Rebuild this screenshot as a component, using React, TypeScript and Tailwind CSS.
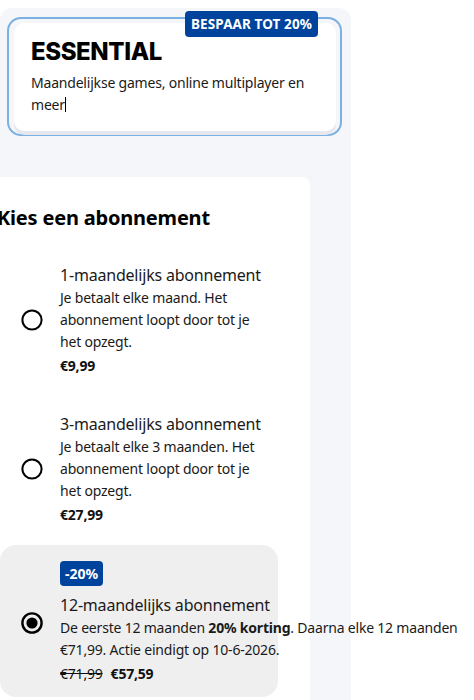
import React from "react";

type Plan = {
  title: string;
  lines: React.ReactNode;
  price: React.ReactNode;
  selected?: boolean;
  badge?: string;
  wide?: boolean;
};

function Radio({ checked }: { checked?: boolean }) {
  return (
    <svg width="22" height="22" viewBox="0 0 22 22" className="shrink-0">
      <circle cx="11" cy="11" r="9.6" fill="none" stroke="#000" strokeWidth={checked ? 2.4 : 2} />
      {checked && <circle cx="11" cy="11" r="5.6" fill="#000" />}
    </svg>
  );
}

function PlanOption({ plan }: { plan: Plan }) {
  return (
    <div
      className={`flex items-center gap-[17px] pl-[21px] pr-3 w-[278px] rounded-2xl ${
        plan.selected ? "bg-[#efefef] pt-4 pb-[12px]" : "py-4"
      }`}
    >
      <Radio checked={plan.selected} />
      <div className="flex-1 min-w-0 flex flex-col tracking-[-0.2px]">
        {plan.badge && (
          <span className="self-start mb-[7px] h-[25px] px-[5px] rounded-[4px] bg-[#00439c] text-white text-[14px] font-bold leading-[25px] tracking-normal">
            {plan.badge}
          </span>
        )}
        <div className="text-[16px] leading-[24px] text-[#1a1a1a] whitespace-nowrap">{plan.title}</div>
        <div className={`text-[14px] leading-[22px] text-[#1a1a1a] ${plan.wide ? "w-[412px]" : ""}`}>
          {plan.lines}
        </div>
        <div className="mt-[2px] text-[14px] leading-[22px] text-[#111]">{plan.price}</div>
      </div>
    </div>
  );
}

export default function App() {
  const plans: Plan[] = [
    {
      title: "1-maandelijks abonnement",
      lines: "Je betaalt elke maand. Het abonnement loopt door tot je het opzegt.",
      price: <span className="font-bold">€9,99</span>,
    },
    {
      title: "3-maandelijks abonnement",
      lines: "Je betaalt elke 3 maanden. Het abonnement loopt door tot je het opzegt.",
      price: <span className="font-bold">€27,99</span>,
    },
    {
      title: "12-maandelijks abonnement",
      badge: "-20%",
      selected: true,
      wide: true,
      lines: (
        <>
          De eerste 12 maanden <span className="font-bold">20% korting</span>. Daarna elke 12 maanden €71,99. Actie
          eindigt op 10-6-2026.
        </>
      ),
      price: (
        <span className="flex gap-2">
          <span className="line-through">€71,99</span>
          <span className="font-bold">€57,59</span>
        </span>
      ),
    },
  ];

  return (
    <div
      className="w-[474px] h-[700px] overflow-hidden bg-white"
      style={{ fontFamily: '"Noto Sans", "Open Sans", sans-serif' }}
    >
      <div className="mt-2 w-[351px] h-[692px] bg-[#f5f6fa] rounded-t-xl pt-[9px] flex flex-col">
        {/* Tier card */}
        <div className="relative ml-[7px] mr-[9px] rounded-[14px] border-2 border-[#7bb0e2] pt-[4px] pl-[5px] pr-[4px] pb-[3px]">
          <span className="absolute -top-[8px] right-[22px] h-[26px] px-[6px] rounded-[4px] bg-[#00439c] text-white text-[13.5px] font-bold leading-[26px] tracking-[0.1px]">
            BESPAAR TOT 20%
          </span>
          <div className="rounded-[10px] bg-white shadow-[0_4px_0_#e7e8ed] pl-[17px] pr-4 pt-[14px] pb-[15px]">
            <div
              className="text-[24px] leading-[30px] font-extrabold text-black tracking-[-0.4px]"
              style={{ fontFamily: 'Inter, "Noto Sans", sans-serif' }}
            >
              ESSENTIAL
            </div>
            <p className="mt-[5px] text-[14px] leading-[22px] text-[#1a1a1a] tracking-[-0.2px]">
              Maandelijkse games, online multiplayer en meer
              <span className="inline-block w-px h-[15px] bg-black align-[-2px]" />
            </p>
          </div>
        </div>

        {/* Plan picker */}
        <div className="mt-[41px] w-[310px] flex-1 bg-white rounded-tr-lg pt-[27px]">
          <h2 className="-ml-[3px] text-[20px] leading-[28px] font-bold text-black whitespace-nowrap tracking-[-0.2px]">
            Kies een abonnement
          </h2>
          <div className="mt-[15px] flex flex-col gap-[3px]">
            {plans.map((p) => (
              <PlanOption key={p.title} plan={p} />
            ))}
          </div>
        </div>
      </div>
    </div>
  );
}
